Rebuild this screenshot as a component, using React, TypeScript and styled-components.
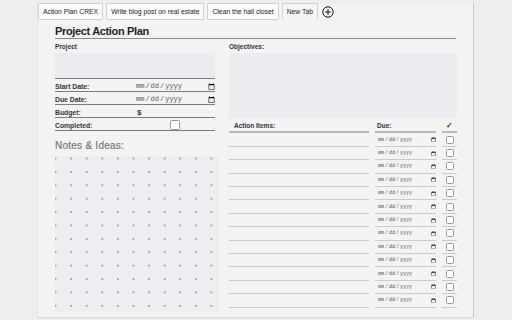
import * as React from "react"
import styled, { createGlobalStyle } from "styled-components"

const GlobalStyle = createGlobalStyle`
  html, body {
    margin: 0;
    background: #ededf0;
    font-family: "Liberation Sans", Arial, sans-serif;
    color: #222;
  }
`;

const Panel = styled.main`
  margin: 3px 0 0 37px;
  width: 437px;
  height: 315px;
  box-sizing: border-box;
  background: #f3f3f3;
  border-left: 1px solid #e2e2e2;
  border-right: 1px solid #c4c4c4;
  border-bottom: 1px solid #d6d6d6;
  display: flex;
  flex-direction: column;
`;

const TabBar = styled.nav`
  display: flex;
  align-items: center;
  gap: 3px;
  height: 17px;
`;

const Tab = styled.div<{ $active?: boolean }>`
  height: 17px;
  box-sizing: border-box;
  display: flex;
  align-items: center;
  padding: 0 4px;
  font-size: 6.8px;
  color: #1e1e1e;
  background: ${(p) => (p.$active ? "#f5f5f5" : "#fbfbfb")};
  border: 1px solid #cfcfcf;
  border-bottom-color: ${(p) => (p.$active ? "#f3f3f3" : "#cfcfcf")};
  border-radius: 1px;
  white-space: nowrap;
`;

const AddTab = styled.span`
  display: flex;
  margin-left: 1px;
`;

const Content = styled.div`
  padding: 0 17px 0 17px;
  flex: 1;
  display: flex;
  flex-direction: column;
`;

const Title = styled.h1`
  margin: 5px 0 0;
  font-size: 11px;
  font-weight: 700;
  letter-spacing: -0.35px;
  line-height: 13px;
  border-bottom: 1px solid #8a8a8a;
`;

const Columns = styled.div`
  display: flex;
  gap: 14px;
`;

const LeftCol = styled.section`
  width: 160px;
  display: flex;
  flex-direction: column;
`;

const RightCol = styled.section`
  width: 228px;
  display: flex;
  flex-direction: column;
`;

const Label = styled.label`
  display: block;
  font-size: 6.5px;
  font-weight: 700;
  color: #333;
  margin: 4px 0 3px;
`;

const Area = styled.textarea<{ $h: number }>`
  height: ${(p) => p.$h}px;
  resize: none;
  border: none;
  padding: 0;
  margin: 0;
  background: #ebecef;
  display: block;
  width: 100%;
  box-sizing: border-box;
`;

const FieldRow = styled.div`
  display: flex;
  align-items: center;
  height: 13px;
  box-sizing: border-box;
  padding-top: 2px;
  border-top: 1px solid #7c7c7c;
  font-size: 6.8px;
  font-weight: 600;
  color: #333;

  & > span:first-child {
    width: 80px;
  }
`;

const LastRule = styled.div`
  border-top: 1px solid #7c7c7c;
`;

const DateInput = styled.input.attrs({ type: "date" })<{ $size: number }>`
  font-family: "Liberation Mono", monospace;
  font-size: ${(p) => p.$size}px;
  color: #555;
  border: none;
  background: transparent;
  padding: 0;
  margin: 0;
  flex: 1;
  min-width: 0;
  height: ${(p) => p.$size + 4}px;
  &::-webkit-calendar-picker-indicator {
    margin: 0;
    padding: 0;
  }
`;

const Box = styled.input.attrs({ type: "checkbox" })<{ $s: number }>`
  appearance: none;
  width: ${(p) => p.$s}px;
  height: ${(p) => p.$s}px;
  margin: 0;
  background: #fff;
  border: 1px solid #9a9a9a;
  border-radius: 1.5px;
`;

const Dollar = styled.span`
  font-weight: 700;
  font-size: 8px;
  padding-left: 2px;
`;

const CheckCell = styled.span`
  flex: 1;
  display: flex;
  justify-content: center;
  align-items: center;
`;

const NotesHeading = styled.h2`
  margin: 9px 0 5px;
  font-size: 10px;
  font-weight: 400;
  letter-spacing: 0.25px;
  color: #767676;
  -webkit-text-stroke: 0.2px #767676;
`;

const DotGrid = styled.div`
  height: 156px;
  width: 164px;
  background-color: #ecedf0;
  background-image: radial-gradient(circle, #555 0.5px, transparent 0.85px);
  background-size: 15.6px 13.4px;
  background-position: -7.3px -4.2px;
`;

const ActionTable = styled.div`
  display: grid;
  grid-template-columns: 140px 61px 15px;
  column-gap: 6px;
  margin-top: 4px;
`;

const HeadCell = styled.div<{ $pad?: number; $center?: boolean }>`
  font-size: 6.5px;
  font-weight: 700;
  color: #333;
  padding-left: ${(p) => p.$pad ?? 0}px;
  text-align: ${(p) => (p.$center ? "center" : "left")};
  height: 9px;
  border-bottom: 2px solid #b8b8b8;
  margin-bottom: 0.5px;
`;

const Tick = styled.span`
  font-size: 8px;
  line-height: 8px;
`;

const ItemInput = styled.input`
  height: 13.4px;
  border: none;
  border-bottom: 1px solid #c9c9c9;
  background: transparent;
  padding: 0;
  margin: 0;
  box-sizing: border-box;
  width: 100%;
`;

const DueCell = styled.div`
  height: 13.4px;
  border-bottom: 1px solid #c9c9c9;
  display: flex;
  align-items: center;
  padding-left: 2px;
  box-sizing: border-box;
`;

const DoneCell = styled.div`
  height: 13.4px;
  border-bottom: 1px solid #c9c9c9;
  display: flex;
  justify-content: center;
  align-items: center;
  box-sizing: border-box;
`;

const tabs = ["Action Plan CREX", "Write blog post on real estate", "Clean the hall closet", "New Tab"];

export default function App() {
  const rows = Array.from({ length: 13 }, (_, i) => i);
  return (
    <>
      <GlobalStyle />
      <Panel>
        <TabBar>
          {tabs.map((t, i) => (
            <Tab key={t} $active={i === tabs.length - 1}>{t}</Tab>
          ))}
          <AddTab>
            <svg width="12" height="12" viewBox="0 0 12 12">
              <circle cx="6" cy="6" r="5.2" fill="none" stroke="#111" strokeWidth="1" />
              <path d="M6 3.2v5.6M3.2 6h5.6" stroke="#111" strokeWidth="1" />
            </svg>
          </AddTab>
        </TabBar>
        <Content>
          <Title>Project Action Plan</Title>
          <Columns>
            <LeftCol>
              <Label>Project</Label>
              <Area $h={25} />
              <FieldRow>
                <span>Start Date:</span>
                <DateInput $size={7} />
              </FieldRow>
              <FieldRow>
                <span>Due Date:</span>
                <DateInput $size={7} />
              </FieldRow>
              <FieldRow>
                <span>Budget:</span>
                <Dollar>$</Dollar>
              </FieldRow>
              <FieldRow>
                <span>Completed:</span>
                <CheckCell><Box $s={10} /></CheckCell>
              </FieldRow>
              <LastRule />
              <NotesHeading>Notes &amp; Ideas:</NotesHeading>
              <DotGrid />
            </LeftCol>
            <RightCol>
              <Label>Objectives:</Label>
              <Area $h={65} />
              <ActionTable>
                <HeadCell $pad={5}>Action Items:</HeadCell>
                <HeadCell $pad={2}>Due:</HeadCell>
                <HeadCell $center><Tick>✓</Tick></HeadCell>
                {rows.map((r) => (
                  <React.Fragment key={r}>
                    <ItemInput />
                    <DueCell><DateInput $size={5} /></DueCell>
                    <DoneCell><Box $s={8} /></DoneCell>
                  </React.Fragment>
                ))}
              </ActionTable>
            </RightCol>
          </Columns>
        </Content>
      </Panel>
    </>
  )
}
